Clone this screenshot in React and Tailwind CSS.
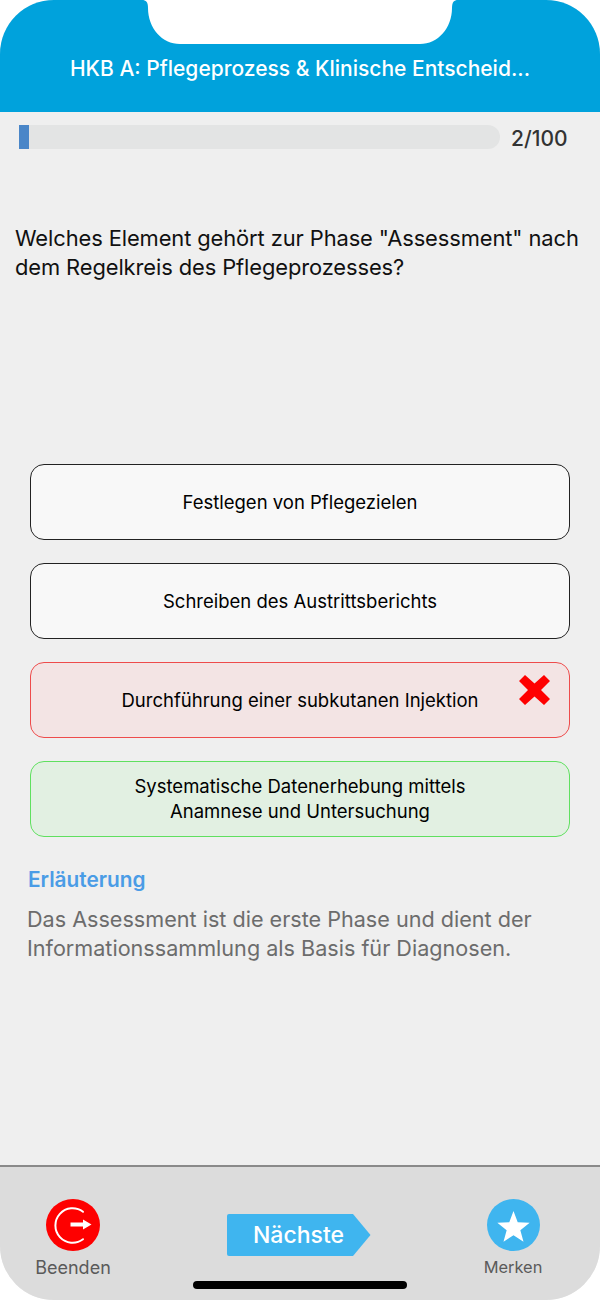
import React from "react";

const answers = [
  { text: "Festlegen von Pflegezielen", cls: "border-[#222] bg-[#f8f8f8]" },
  { text: "Schreiben des Austrittsberichts", cls: "border-[#222] bg-[#f8f8f8]" },
  { text: "Durchführung einer subkutanen Injektion", cls: "border-[#ee4b4b] bg-[#f3e4e4]", wrong: true },
  { text: <>Systematische Datenerhebung mittels<br />Anamnese und Untersuchung</>, cls: "border-[#5fe05f] bg-[#e2f0e2]" },
];

export default function App() {
  return (
    <div className="w-[600px] h-[1300px] bg-white overflow-hidden font-['Inter','Liberation_Sans',sans-serif]">
      <div className="w-full h-full flex flex-col rounded-[54px] overflow-hidden bg-[#efefef] relative">
        <header className="h-[112px] shrink-0 bg-[#00a2dc] flex items-end justify-center pb-[30px] relative">
          <svg className="absolute left-[142px] top-0" width="316" height="44" viewBox="0 0 316 44">
            <path d="M0 0 C4 0 6 2 6 8 C6 28 20 44 38 44 H278 C296 44 310 28 310 8 C310 2 312 0 316 0 Z" fill="#fff" />
          </svg>
          <h1 className="text-white text-[21px] leading-[26px] font-medium">HKB A: Pflegeprozess &amp; Klinische Entscheid...</h1>
        </header>

        <div className="flex items-center pl-[19px] pt-[13px] h-[37px] shrink-0">
          <div className="w-[481px] h-[24px] rounded-r-[12px] bg-[#e3e4e4]">
            <div className="w-[10px] h-full bg-[#4a86c8]" />
          </div>
          <span className="ml-[11px] mt-[3px] text-[21px] leading-[26px] font-medium text-[#333]">2/100</span>
        </div>

        <p className="mt-[75px] px-[15px] text-[21.9px] leading-[29px] text-[#111] tracking-[-0.1px] h-[58px] whitespace-nowrap">
          Welches Element gehört zur Phase "Assessment" nach<br />dem Regelkreis des Pflegeprozesses?
        </p>

        <div className="mt-[182px] px-[30px] flex flex-col gap-[23px]">
          {answers.map((a, i) => (
            <div key={i} className={`h-[76px] rounded-[14px] border flex items-center justify-center text-center text-[18.5px] leading-[25px] text-black relative ${a.cls}`}>
              <span>{a.text}</span>
              {a.wrong && (
                <svg className="absolute right-[19px] top-[12px]" width="31" height="30" viewBox="0 0 31 30">
                  <path d="M6 0 L15.500 8.500 L25 0 L31 6 L22 15 L31 24 L25 30 L15.500 21.500 L6 30 L0 24 L9 15 L0 6 Z" fill="#fe0000" />
                </svg>
              )}
            </div>
          ))}
        </div>

        <h2 className="mt-[29px] ml-[28px] text-[20.8px] leading-[28px] font-semibold text-[#4a9ce6]">Erläuterung</h2>
        <p className="mt-[11px] ml-[27px] text-[21.6px] leading-[29px] text-[#6c6c6c] whitespace-nowrap">
          Das Assessment ist die erste Phase und dient der<br />Informationssammlung als Basis für Diagnosen.
        </p>

        <footer className="mt-auto h-[135px] shrink-0 bg-[#dcdcdc] border-t-2 border-[#8a8a8a] relative flex justify-between items-start">
          <div className="w-[146px] flex flex-col items-center pt-[32px]">
            <svg width="54" height="52" viewBox="0 0 54 52">
              <ellipse cx="27" cy="26" rx="27" ry="26" fill="#fe0000" />
              <path d="M37 12.800 A17.200 17.200 0 1 0 37 40.200" fill="none" stroke="#fff" strokeWidth="2" strokeLinecap="round" />
              <path d="M24.500 23.500 H37 V20.500 L45.500 25.500 L37 30.500 V27.500 H24.500 Z" fill="#fff" />
            </svg>
            <span className="mt-[5px] text-[18px] leading-[24px] text-[#5a5a5a]">Beenden</span>
          </div>

          <div className="mt-[47px] ml-[-4px] flex">
            <div className="w-[126px] h-[42px] bg-[#3fb5ef] rounded-l-[2px] flex items-center justify-center text-white text-[23px] font-medium pl-[17px] whitespace-nowrap">Nächste</div>
            <svg width="18" height="42" viewBox="0 0 18 42" className="block"><path d="M0 0 L17.500 21 L0 42 Z" fill="#3fb5ef" /></svg>
          </div>

          <div className="w-[114px] mr-[30px] flex flex-col items-center pt-[32px]">
            <svg width="53" height="52" viewBox="0 0 53 52">
              <ellipse cx="26.500" cy="26" rx="26.500" ry="26" fill="#3fb5ef" />
              <path d="M26.500 12 L30.730 23.180 L42.670 23.750 L33.350 31.220 L36.500 42.750 L26.500 36.200 L16.500 42.750 L19.650 31.220 L10.330 23.750 L22.270 23.180 Z" fill="#fff" />
            </svg>
            <span className="mt-[4px] text-[16.4px] leading-[24px] text-[#5a5a5a]">Merken</span>
          </div>

          <div className="absolute left-[193px] top-[114px] w-[214px] h-[8px] rounded-full bg-black" />
        </footer>
      </div>
    </div>
  );
}
